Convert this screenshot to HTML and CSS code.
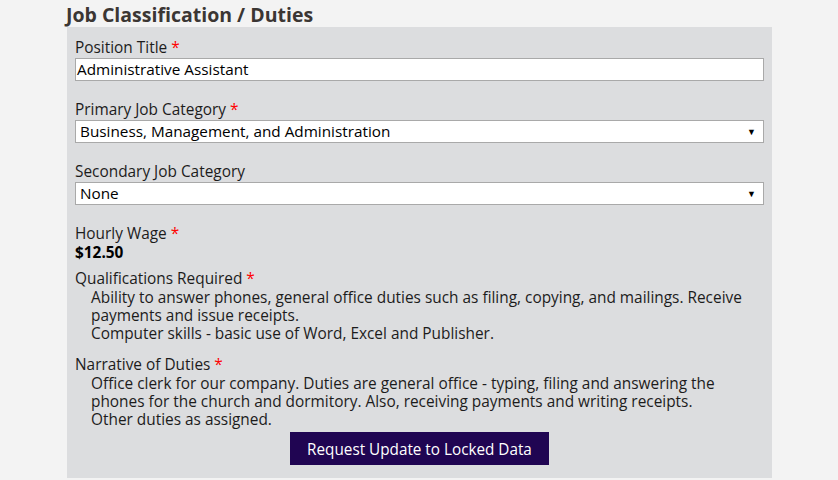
FILE: index.html
```html
<!DOCTYPE html>
<html>
<head>
<meta charset="utf-8">
<link rel="stylesheet" href="styles.css">
</head>
<body>
<div class="page">
  <h2 class="title">Job Classification / Duties</h2>
  <div class="panel">
    <div class="field">
      <div class="label">Position Title <span class="req">*</span></div>
      <div class="input">Administrative Assistant</div>
    </div>
    <div class="field">
      <div class="label">Primary Job Category <span class="req">*</span></div>
      <div class="select"><span>Business, Management, and Administration</span><span class="arrow">&#9660;</span></div>
    </div>
    <div class="field">
      <div class="label">Secondary Job Category</div>
      <div class="select"><span>None</span><span class="arrow">&#9660;</span></div>
    </div>
    <div class="field tight">
      <div class="label">Hourly Wage <span class="req">*</span></div>
      <div class="value">$12.50</div>
    </div>
    <div class="field roomy">
      <div class="label">Qualifications Required <span class="req">*</span></div>
      <div class="text">Ability to answer phones, general office duties such as filing, copying, and mailings. Receive payments and issue receipts.<br>Computer skills - basic use of Word, Excel and Publisher.</div>
    </div>
    <div class="field last">
      <div class="label">Narrative of Duties <span class="req">*</span></div>
      <div class="text">Office clerk for our company. Duties are general office - typing, filing and answering the phones for the church and dormitory. Also, receiving payments and writing receipts.<br>Other duties as assigned.</div>
    </div>
    <div class="actions">
      <button class="btn"><span class="btn-text">Request Update to Locked Data</span></button>
    </div>
  </div>
</div>
</body>
</html>
```
FILE: styles.css
```css
html, body {
  margin: 0;
  padding: 0;
  background: #f3f3f3;
  font-family: "Open Sans", "Liberation Sans", sans-serif;
  color: #1c1c1c;
}
.page {
  width: 705px;
  margin-left: 67px;
}
.title {
  margin: 0 0 0 -1px;
  padding: 3px 0 0 0;
  font-size: 19.5px;
  font-weight: 700;
  line-height: 24px;
  color: #3b3633;
}
.panel {
  background: #dcdddf;
  padding: 9px 8px 13px 8px;
}
.field {
  margin-bottom: 17px;
}
.field.tight {
  margin-bottom: 6px;
}
.field.roomy {
  margin-bottom: 9px;
}
.field.last {
  margin-bottom: 3px;
}
.label {
  font-size: 15.4px;
  line-height: 21px;
  padding-top: 1px;
}
.req {
  color: #f00;
}
.input, .select {
  background: #fff;
  border: 1px solid #a9a9a9;
  height: 21px;
  font-size: 15.3px;
  line-height: 21px;
  color: #000;
}
.input {
  padding: 0 1px;
}
.select {
  display: flex;
  justify-content: space-between;
  padding: 0 7px 0 4px;
}
.arrow {
  font-size: 9px;
  color: #000;
}
.value {
  font-size: 15.4px;
  font-weight: 700;
  line-height: 17px;
  color: #000;
}
.text {
  font-size: 15.4px;
  line-height: 18.2px;
  padding-left: 16px;
  padding-right: 16px;
}
.actions {
  display: flex;
  justify-content: center;
}
.btn {
  background: #200552;
  color: #fff;
  border: 0;
  font-family: "Open Sans", "Liberation Sans", sans-serif;
  font-size: 16.8px;
  height: 33px;
  width: 259px;
  padding: 0;
  display: flex;
  align-items: center;
  justify-content: center;
}
.btn-text {
  display: inline-block;
  white-space: nowrap;
  transform: scaleX(0.91);
}
```
